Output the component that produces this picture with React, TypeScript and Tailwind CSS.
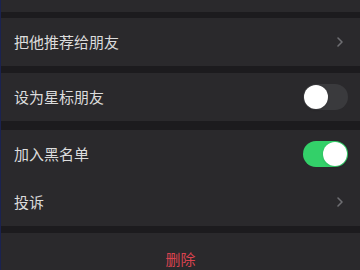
import { useState } from 'react';

function Chevron() {
  return (
    <svg width="8" height="12" viewBox="0 0 8 12" fill="none" className="text-[#6e6e72]">
      <path d="M2 2l4 4-4 4" stroke="currentColor" strokeWidth="1.6" strokeLinecap="round" strokeLinejoin="round" />
    </svg>
  );
}

function Toggle({ on, onClick }: { on: boolean; onClick: () => void }) {
  return (
    <button
      onClick={onClick}
      className={`relative w-[45px] h-[26px] rounded-full transition-colors ${on ? 'bg-[#33d069]' : 'bg-[#3a3a3d]'}`}
    >
      <span
        className={`absolute top-[1px] w-[24px] h-[24px] rounded-full bg-white shadow transition-all ${
          on ? 'left-[20px]' : 'left-[1px]'
        }`}
      />
    </button>
  );
}

export default function App() {
  const [star, setStar] = useState(false);
  const [blocked, setBlocked] = useState(true);

  const font = "font-['Noto_Sans_CJK_SC',sans-serif]";

  return (
    <div className={`w-[360px] h-[270px] overflow-hidden bg-[#1c1b1e] border-l border-[#1a2250] ${font}`}>
      <div className="h-[12px] bg-[#2a292c]" />
      <div className="h-[6px]" />

      <div className="h-[48px] bg-[#2a292c] flex items-center justify-between pl-[13px] pr-[16px]">
        <span className="text-[15px] text-[#dcdcdc]">把他推荐给朋友</span>
        <Chevron />
      </div>
      <div className="h-[7px]" />

      <div className="h-[48px] bg-[#2a292c] flex items-center justify-between pl-[13px] pr-[12px]">
        <span className="text-[15px] text-[#dcdcdc]">设为星标朋友</span>
        <Toggle on={star} onClick={() => setStar(!star)} />
      </div>
      <div className="h-[9px]" />

      <div className="bg-[#2a292c]">
        <div className="h-[48px] flex items-center justify-between pl-[13px] pr-[12px]">
          <span className="text-[15px] text-[#dcdcdc]">加入黑名单</span>
          <Toggle on={blocked} onClick={() => setBlocked(!blocked)} />
        </div>
        <div className="h-[48px] flex items-center justify-between pl-[13px] pr-[16px]">
          <span className="text-[15px] text-[#dcdcdc]">投诉</span>
          <Chevron />
        </div>
      </div>
      <div className="h-[7px]" />

      <div className="h-[52px] bg-[#2a292c] flex items-center justify-center">
        <span className="text-[15px] text-[#d9434f]">删除</span>
      </div>
    </div>
  );
}
